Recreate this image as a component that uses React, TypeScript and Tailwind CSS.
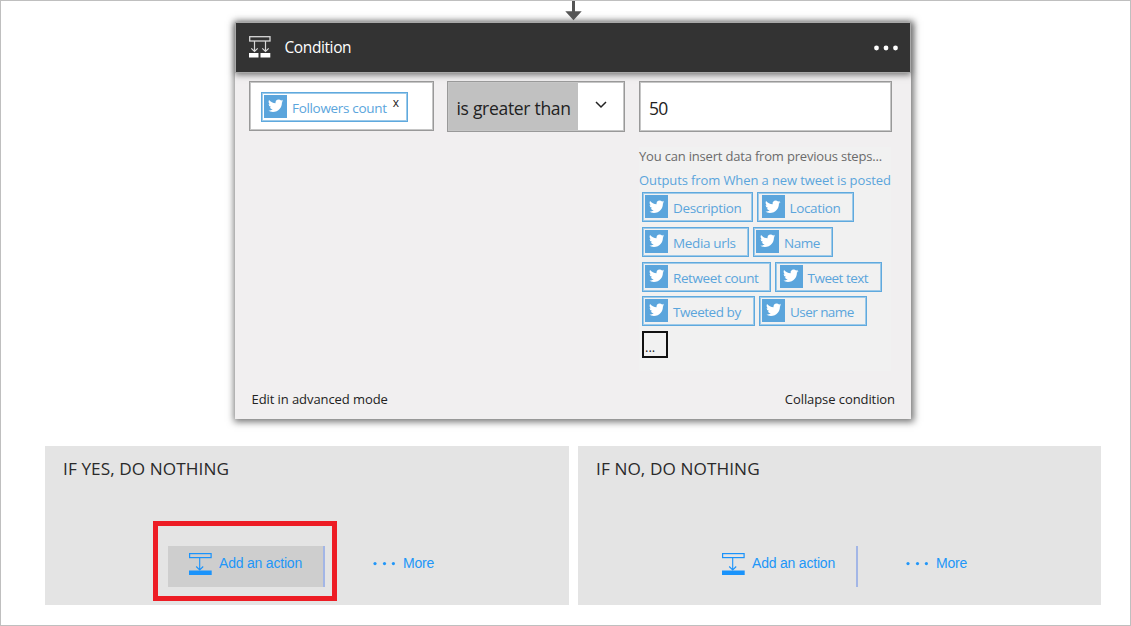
import React from "react";

const BIRD =
  "M23.95 4.57a10 10 0 0 1-2.82.77 4.96 4.96 0 0 0 2.16-2.72c-.95.55-2 .95-3.13 1.18a4.92 4.92 0 0 0-8.38 4.48C7.69 8.09 4.07 6.13 1.64 3.16a4.82 4.82 0 0 0-.67 2.48c0 1.71.87 3.21 2.19 4.1a4.9 4.9 0 0 1-2.23-.62v.06a4.92 4.92 0 0 0 3.95 4.83 5 5 0 0 1-2.21.08 4.94 4.94 0 0 0 4.6 3.42A9.87 9.87 0 0 1 0 19.54a13.99 13.99 0 0 0 7.55 2.21c9.05 0 14-7.5 14-13.98 0-.21 0-.42-.02-.63a9.94 9.94 0 0 0 2.46-2.55z";

function TwitterTile() {
  return (
    <span className="flex h-[23px] w-[23px] shrink-0 items-center justify-center bg-[#5ba5dc]">
      <svg viewBox="0 0 24 24" className="-mt-px h-[15.5px] w-[15.5px]" fill="#fff">
        <path d={BIRD} />
      </svg>
    </span>
  );
}

function Chip({ label, width, spacing, inset = "pl-[2px]" }: { label: string; width: string; spacing: string; inset?: string }) {
  return (
    <span
      className={`flex h-[30px] border border-[#5fa9de] pt-[2px] text-[13.5px] text-[#5ba5dc] shadow-[inset_0_0_0_1px_#9dcae9] ${inset} ${width}`}
    >
      <TwitterTile />
      <span className={`ml-[5px] pt-[2px] leading-[23px] whitespace-nowrap ${spacing}`}>{label}</span>
    </span>
  );
}

function ConditionIcon() {
  return (
    <svg width="23" height="22" viewBox="0 0 23 22" fill="none" stroke="#d8d8d8">
      <rect x=".7" y=".7" width="20.3" height="4.3" strokeWidth="1.3" />
      <path d="M5.500 5v10.500M16.500 5v10.500M2.300 12.300l3.200 3.200 3.200-3.200M13.300 12.300l3.200 3.200 3.200-3.200" strokeWidth="1.2" />
      <path d="M0 17h9.500v4.500H0zM11.500 17h9.800v4.500h-9.800z" fill="#fff" stroke="none" />
    </svg>
  );
}

function ActionIcon() {
  return (
    <svg width="23" height="22" viewBox="0 0 23 22" fill="none" stroke="#1a93fb">
      <rect x=".6" y=".6" width="21.500" height="4" strokeWidth="1.2" />
      <path d="M10.700 5v12M7.200 13.500l3.500 3.500 3.500-3.500" strokeWidth="1.1" />
      <path d="M0 17.500h22.700v4.500H0z" fill="#1a93fb" stroke="none" />
    </svg>
  );
}

function Branch({ title, active, width }: { title: string; active?: boolean; width: string }) {
  return (
    <section className={`relative flex h-[159px] flex-col bg-[#e4e4e4] ${width}`}>
      <h2 className="h-[100px] pt-[10px] pl-[18px] text-[17.2px] leading-[26px] tracking-[0.080px] text-[#2a2a2a]">{title}</h2>
      <div className="flex h-[41px] pl-[123px] font-['Liberation_Sans',sans-serif] text-[14px] leading-[34px] tracking-[-0.2px] text-[#2196f8]">
        <button
          className={`flex w-[157px] border-r-2 border-[#a3b6e6] pl-[21px] ${active ? "bg-[#cecece]" : ""}`}
        >
          <span className="mt-[7px] mr-[7px]">
            <ActionIcon />
          </span>
          Add an action
        </button>
        <button className="ml-[48px] flex">
          <svg width="22" height="34" viewBox="0 0 22 34" fill="#2196f8" className="mr-2">
            <circle cx="2" cy="17.600" r="1.600" />
            <circle cx="11.500" cy="17.600" r="1.600" />
            <circle cx="20.400" cy="17.600" r="1.600" />
          </svg>
          More
        </button>
      </div>
      {active && <div className="absolute top-[75px] left-[108px] h-[80px] w-[184px] border-[5px] border-[#ed1c24]" />}
    </section>
  );
}

export default function App() {
  return (
    <main className="flex h-[626px] w-[1131px] flex-col overflow-hidden border border-[#bfbfbf] bg-white font-['Open_Sans','Noto_Sans',sans-serif]">
      <div className="relative z-10 flex h-[21px] shrink-0 pl-[564px]">
        <svg width="17" height="20" viewBox="0 0 17 20" fill="#555">
          <path d="M7 0h3v10.300h6.700L8.500 19.200.3 10.300H7z" />
        </svg>
      </div>

      <article className="ml-[234px] flex h-[397px] w-[676px] shrink-0 flex-col bg-[#f1eff0] shadow-[1px_1px_7px_2px_#777]">
        <header className="flex h-[51px] shrink-0 items-center border border-[#a8a8a8] bg-[#333] pr-3 pl-[12.5px] text-white shadow-[0_2px_6px_#777]">
          <div className="-mt-px">
            <ConditionIcon />
          </div>
          <h1 className="ml-[13px] text-[15.500px] tracking-[-0.4px]">Condition</h1>
          <svg width="24" height="6" viewBox="0 0 24 6" fill="#fff" className="ml-auto">
            <circle cx="2.500" cy="3" r="2.400" />
            <circle cx="12" cy="3" r="2.400" />
            <circle cx="21.500" cy="3" r="2.400" />
          </svg>
        </header>

        <div className="flex h-[299px] shrink-0 items-start pt-[8.400px] pl-[14px]">
          <div className="h-[49.5px] w-[184.500px] border border-[#999] bg-white pt-[9.5px] pl-[11px] shadow-[inset_0_0_0_1px_#c6c6c6]">
            <div className="flex h-[30px] w-[147px] border border-[#5fa9de] pt-[2px] pl-[2px] text-[13.500px] text-[#5ba5dc] shadow-[inset_0_0_0_1px_#9dcae9]">
              <TwitterTile />
              <span className="ml-[5px] pt-[2px] leading-[23px] tracking-[-0.32px] whitespace-nowrap">Followers count</span>
              <button className="ml-[6px] h-4 text-[12px] leading-[9px] text-[#222]">x</button>
            </div>
          </div>

          <div className="ml-[13.500px] flex h-[51px] w-[178px] border border-[#999] bg-white text-[17.5px] text-[#222] shadow-[inset_0_0_0_1px_#c6c6c6]">
            <span className="m-px mr-0 flex w-[128.500px] items-center bg-[#c1c1c1] pt-[2px] pl-[7.500px] tracking-[-0.3px] whitespace-nowrap">
              is greater than
            </span>
            <span className="flex flex-1 items-center justify-center">
              <svg width="12" height="8" viewBox="0 0 12 8" fill="none" stroke="#222" strokeWidth="1.500" className="-mt-[3px]">
                <path d="m1 1 5 5 5-5" />
              </svg>
            </span>
          </div>

          <div className="ml-[14px] flex w-[253px] flex-col">
            <div className="flex h-[51px] items-center border border-[#999] bg-white pt-[2px] pl-[9px] text-[17.5px] tracking-[-0.8px] text-[#222] shadow-[inset_0_0_0_1px_#c6c6c6]">
              50
            </div>
            <div className="mt-[14.600px] h-[224px] w-[252px] bg-[#f1f1f1] text-[13px] whitespace-nowrap">
              <p className="h-6 leading-[18px] tracking-[-0.190px] text-[#6b6b6b]">You can insert data from previous steps...</p>
              <p className="h-[21.400px] leading-[18px] tracking-[-0.1px] text-[#5ba5dc]">Outputs from When a new tweet is posted</p>
              <div className="flex flex-col gap-[4.600px] pl-[3px]">
                <div className="flex gap-1">
                  <Chip label="Description" width="w-[111px]" spacing="tracking-[-0.33px]" />
                  <Chip label="Location" width="w-[97px]" spacing="tracking-[-0.35px]" inset="pl-[3.5px]" />
                </div>
                <div className="flex gap-1">
                  <Chip label="Media urls" width="w-[107px]" spacing="tracking-[-0.35px]" />
                  <Chip label="Name" width="w-[80px]" spacing="tracking-[-0.5px]" />
                </div>
                <div className="flex gap-1">
                  <Chip label="Retweet count" width="w-[129px]" spacing="tracking-[-0.4px]" />
                  <Chip label="Tweet text" width="w-[107px]" spacing="tracking-[-0.5px]" inset="pl-[3.5px]" />
                </div>
                <div className="flex gap-1">
                  <Chip label="Tweeted by" width="w-[113px]" spacing="tracking-[-0.45px]" />
                  <Chip label="User name" width="w-[108px]" spacing="tracking-[-0.55px]" />
                </div>
                <button className="flex h-[27px] w-[26px] border-2 border-[#111] pt-[5px] pl-px text-[13px] leading-[18px] text-[#222]">
                  ...
                </button>
              </div>
            </div>
          </div>
        </div>

        <footer className="flex justify-between pt-[18px] pr-4 pl-[16.5px] text-[13px] leading-[18px] tracking-[-0.080px] text-[#222]">
          <span>Edit in advanced mode</span>
          <span>Collapse condition</span>
        </footer>
      </article>

      <div className="mt-[27px] flex gap-[9px] pl-[44px]">
        <Branch title="IF YES, DO NOTHING" width="w-[524px]" active />
        <Branch title="IF NO, DO NOTHING" width="w-[523px]" />
      </div>
    </main>
  );
}
